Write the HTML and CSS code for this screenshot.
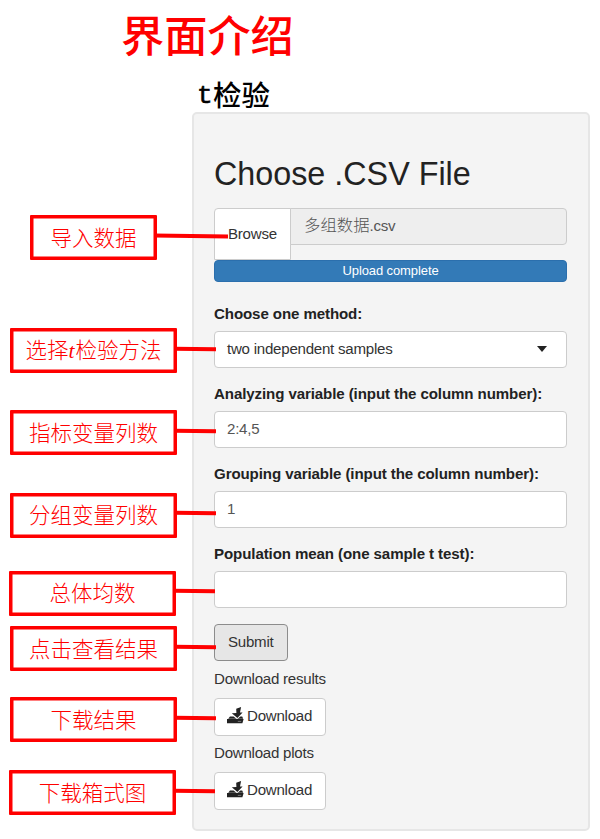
FILE: index.html
```html
<!DOCTYPE html>
<html lang="zh-CN">
<head>
<meta charset="utf-8">
<title>界面介绍</title>
<link rel="stylesheet" href="styles.css">
</head>
<body>
<svg class="defs" aria-hidden="true">
  <symbol id="save" viewBox="0 0 17 17">
    <path d="M9.2 1.8 L14.1 0 L13 5.6 L15.6 5.4 L10.4 11 L4.8 6.3 L9.4 6 Z"/>
    <path d="M3 9.6 H6.6 L10 12.2 L13.4 9.6 H15.2 L16.2 11.8 H1.2 Z"/>
    <path d="M0 12 H16.6 L15.4 16.2 H0 Z"/>
    <path class="slot" d="M10.8 14.4 H14.2"/>
  </symbol>
</svg>
<h1 class="page-title">界面介绍</h1>
<h2 class="section-title"><span class="latin">t</span><span>检验</span></h2>
<main class="layout">
  <aside class="callouts">
    <div class="callout upload">导入数据</div>
    <div class="callout method"><span>选择<i>t</i>检验方法</span></div>
    <div class="callout analyzing">指标变量列数</div>
    <div class="callout grouping">分组变量列数</div>
    <div class="callout mean">总体均数</div>
    <div class="callout run">点击查看结果</div>
    <div class="callout results">下载结果</div>
    <div class="callout plots">下载箱式图</div>
  </aside>
  <form class="panel">
    <h2 class="panel-title">Choose .CSV File</h2>
    <div class="file-row">
      <div class="browse">Browse</div>
      <div class="file-name"><span class="cjk">多组数据</span>.csv</div>
    </div>
    <div class="progress">Upload complete</div>
    <div class="label">Choose one method:</div>
    <div class="field select">two independent samples<span class="caret"></span></div>
    <div class="label">Analyzing variable (input the column number):</div>
    <div class="field">2:4,5</div>
    <div class="label">Grouping variable (input the column number):</div>
    <div class="field">1</div>
    <div class="label">Population mean (one sample t test):</div>
    <div class="field"></div>
    <div class="button submit">Submit</div>
    <div class="caption">Download results</div>
    <div class="button"><svg class="icon"><use href="#save"/></svg>Download</div>
    <div class="caption">Download plots</div>
    <div class="button"><svg class="icon"><use href="#save"/></svg>Download</div>
  </form>
</main>
</body>
</html>
```
FILE: styles.css
```css
* { box-sizing: border-box; }
body {
  margin: 0;
  width: 600px;
  height: 839px;
  overflow: hidden;
  background: #fff;
  color: #333;
  font: 15.08px/22px "Liberation Sans", "Noto Sans CJK SC", sans-serif;
  letter-spacing: -0.24px;
}
.defs { display: none; }
.page-title {
  margin: 0;
  padding: 3px 0 0 121px;
  height: 76px;
  color: #f00;
  font: 500 43.2px/60px "Noto Sans CJK SC", sans-serif;
  letter-spacing: 0;
}
.section-title {
  display: flex;
  margin: 0;
  padding-left: 197px;
  height: 36px;
  color: #000;
  font: 500 28.4px/36px "Noto Sans CJK SC", sans-serif;
  letter-spacing: 0;
}
.latin {
  width: 16px;
  font-family: "Liberation Mono", monospace;
  font-size: 26px;
  line-height: 41px;
  -webkit-text-stroke: 0.6px #000;
}
.layout {
  display: grid;
  grid-template-columns: 192px 398px;
}
.callouts { padding-left: 10px; }
.callout {
  position: relative;
  display: flex;
  align-items: center;
  justify-content: center;
  width: 167px;
  height: 45px;
  padding-bottom: 2px;
  border: 3px solid #f00;
  border-radius: 1px;
  box-shadow: inset 0 0 0 0.5px #f00;
  background: #fff;
  color: #f00;
  font: 300 21.5px/30px "Noto Sans CJK SC", sans-serif;
  letter-spacing: 0;
  white-space: nowrap;
}
.callout i {
  display: inline-block;
  width: 7px;
  font-family: "Liberation Serif", serif;
}
.callout::after {
  content: "";
  position: absolute;
  left: 161px;
  top: 15.5px;
  width: 42px;
  height: 4px;
  background: #f00;
  transform: rotate(1deg);
}
.upload { width: 127px; margin: 103px 0 0 20px; }
.upload::after { left: 121px; width: 74px; transform: rotate(0.6deg); }
.method { margin-top: 68px; }
.analyzing { margin-top: 37px; }
.grouping { margin-top: 37.5px; }
.mean { margin: 33px 0 0 -1px; }
.run { margin-top: 10.5px; }
.results { margin-top: 26px; }
.plots { margin: 28px 0 0 -1px; }
.panel {
  height: 719px;
  padding: 40px 20px 0;
  border: 2px solid #e6e6e6;
  border-radius: 5px;
  background: #f4f4f4;
}
.panel-title {
  margin: 0 0 14px;
  color: #222;
  font-size: 32.3px;
  font-weight: normal;
  line-height: 40px;
  letter-spacing: 0;
}
.file-row {
  display: flex;
  align-items: flex-start;
  width: 353px;
  height: 52px;
}
.browse {
  width: 77px;
  height: 52px;
  padding-left: 13px;
  border: 1px solid #ccc;
  border-radius: 4px 0 0 0;
  background: #fff;
  line-height: 49px;
}
.file-name {
  flex: 1;
  height: 37px;
  margin-left: -1px;
  padding-left: 13px;
  border: 1px solid #ccc;
  border-radius: 0 4px 4px 0;
  background: #eee;
  color: #555;
  line-height: 31px;
}
.cjk {
  font: 300 16.4px/30px "Noto Sans CJK SC", sans-serif;
  letter-spacing: 0;
}
.progress {
  width: 353px;
  height: 22px;
  margin-bottom: 21px;
  border: 1px solid #2b6fad;
  border-radius: 4px;
  background: #337ab7;
  color: #fff;
  font-size: 13px;
  line-height: 20px;
  letter-spacing: -0.1px;
  text-align: center;
}
.label {
  height: 22px;
  margin-bottom: 6px;
  color: #222;
  font-weight: bold;
  letter-spacing: -0.1px;
}
.field {
  width: 353px;
  height: 37px;
  margin-bottom: 15px;
  padding-left: 12px;
  border: 1px solid #ccc;
  border-radius: 4px;
  background: #fff;
  color: #555;
  line-height: 33px;
}
.select {
  display: flex;
  align-items: center;
  justify-content: space-between;
  padding: 0 19px 2px 12px;
  color: #333;
}
.caret {
  border: 5.5px solid transparent;
  border-top: 6px solid #222;
  border-bottom: 0;
}
.button {
  display: flex;
  align-items: center;
  width: 112px;
  height: 38px;
  padding: 0 0 2px 12px;
  border: 1px solid #ccc;
  border-radius: 4px;
  background: #fff;
}
.submit {
  width: 74px;
  margin-top: 16px;
  height: 37px;
  padding-left: 13px;
  border-color: #8c8c8c;
  background: #e6e6e6;
}
.caption { margin: 7px 0 8px; }
.caption + .button + .caption { margin: 6px 0 8px; }
.icon {
  width: 17px;
  height: 17px;
  margin: -1px 3px 0 0;
  fill: #222;
}
.slot { stroke: #999; stroke-width: 0.7; }
```
